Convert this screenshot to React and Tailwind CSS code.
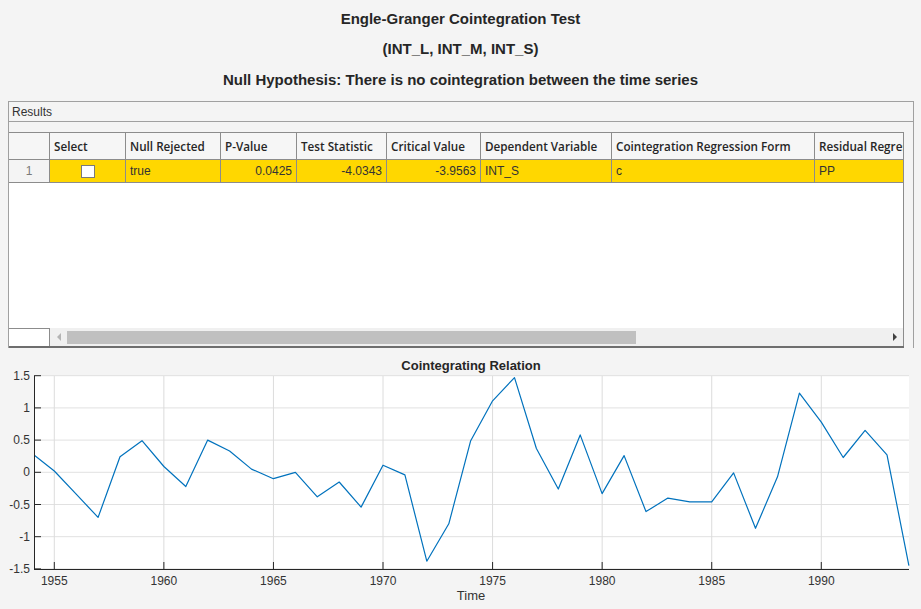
import React from "react";

const columns = [
    { label: "", width: "w-[41px]" },
    { label: "Select", width: "w-[76px]" },
    { label: "Null Rejected", width: "w-[95px]" },
    { label: "P-Value", width: "w-[76px]" },
    { label: "Test Statistic", width: "w-[90px]" },
    { label: "Critical Value", width: "w-[94px]" },
    { label: "Dependent Variable", width: "w-[131px]" },
    { label: "Cointegration Regression Form", width: "w-[203px]" },
    { label: "Residual Regression Form", width: "w-[89px]" },
];

// cointegrating relation, one value per year 1954..1994
const series = [
    0.27, 0.02, -0.34, -0.7, 0.24, 0.49, 0.09, -0.22, 0.5, 0.33, 0.05, -0.1, 0.0, -0.38, -0.15, -0.54, 0.11,
    -0.04, -1.38, -0.8, 0.49, 1.11, 1.47, 0.37, -0.26, 0.58, -0.33, 0.26, -0.61, -0.4, -0.46, -0.46, -0.01,
    -0.87, -0.07, 1.23, 0.78, 0.23, 0.65, 0.27, -1.45,
];

const AX = { left: 34, right: 909, top: 376, bottom: 569 };
const xOf = (year) => Math.max(AX.left, 54.3 + (year - 1955) * 21.914);
const yOf = (v) => 472.3 - v * 64.4;

const xTicks = [1955, 1960, 1965, 1970, 1975, 1980, 1985, 1990];
const yTicks = [1.5, 1, 0.5, 0, -0.5, -1, -1.5];

const cell = "border-r border-b border-[#8c8c8c] h-full flex items-center px-[4px] overflow-hidden whitespace-nowrap";

const ResultsTable = () => {
    return (
        <div className="w-[895px] h-[216px] flex flex-col bg-white border-t border-b-2 border-t-[#8c8c8c] border-b-[#6e6e6e]">
            <div className="flex h-[27px] bg-[#f6f6f6] font-['Open_Sans',sans-serif] font-semibold text-[11.7px] text-[#262626]">
                {columns.map((col, i) => (
                    <div key={i} className={`${cell} ${col.width} pt-[1px]`}>{col.label}</div>
                ))}
            </div>
            <div className="flex h-[23px] bg-[#ffd700] font-['Liberation_Sans',sans-serif] text-[12px] text-[#333333]">
                <div className={`${cell} w-[41px] justify-center bg-[#f4f4f4] text-[#7a7a7a]`}>1</div>
                <div className={`${cell} w-[76px] justify-center`}>
                    <span className="block w-[14px] h-[13px] bg-white border border-[#7a7a7a]" />
                </div>
                <div className={`${cell} w-[95px]`}>true</div>
                <div className={`${cell} w-[76px] justify-end`}>0.0425</div>
                <div className={`${cell} w-[90px] justify-end`}>-4.0343</div>
                <div className={`${cell} w-[94px] justify-end`}>-3.9563</div>
                <div className={`${cell} w-[131px]`}>INT_S</div>
                <div className={`${cell} w-[203px]`}>c</div>
                <div className={`${cell} w-[89px]`}>PP</div>
            </div>
            <div className="flex-1 border-r border-[#8c8c8c]" />
            <div className="flex h-[18px]">
                <div className="w-[41px] border-t border-r border-[#8c8c8c] bg-white" />
                <div className="flex-1 flex items-center bg-[#f0f0f0] border-r border-[#8c8c8c]">
                    <span className="ml-[7px] w-0 h-0 border-y-[4px] border-y-transparent border-r-[4px] border-r-[#b4b4b4]" />
                    <div className="ml-[6px] w-[569px] h-[13px] bg-[#c0c0c0]" />
                    <div className="flex-1" />
                    <span className="mr-[6px] w-0 h-0 border-y-[4px] border-y-transparent border-l-[4px] border-l-[#404040]" />
                </div>
            </div>
        </div>
    );
};

const Chart = () => {
    const points = series.map((v, i) => `${xOf(1954 + i).toFixed(1)},${yOf(v).toFixed(1)}`).join(" ");
    return (
        <svg className="block" width="921" height="261" viewBox="0 348 921 261" fontFamily="Liberation Sans, Arial, sans-serif">
            <text x="471" y="370" textAnchor="middle" fontSize="13" fontWeight="bold" fill="#262626">Cointegrating Relation</text>
            <rect x={AX.left} y={AX.top} width={AX.right - AX.left} height={AX.bottom - AX.top} fill="#ffffff" />
            {yTicks.map((t) => (
                <line key={`gy${t}`} x1={AX.left} x2={AX.right} y1={yOf(t)} y2={yOf(t)} stroke="#e1e1e1" strokeWidth="1" />
            ))}
            {xTicks.map((t) => (
                <line key={`gx${t}`} x1={xOf(t)} x2={xOf(t)} y1={AX.top} y2={AX.bottom} stroke="#dcdcdc" strokeWidth="1" />
            ))}
            <clipPath id="axclip">
                <rect x={AX.left} y={AX.top - 2} width={AX.right - AX.left + 1} height={AX.bottom - AX.top + 4} />
            </clipPath>
            <polyline points={points} fill="none" stroke="#0072bd" strokeWidth="1.2" strokeLinejoin="round" clipPath="url(#axclip)" />
            <line x1={AX.left + 0.5} x2={AX.left + 0.5} y1={AX.top} y2={AX.bottom} stroke="#262626" strokeWidth="1" />
            <line x1={AX.left} x2={AX.right} y1={AX.bottom + 0.5} y2={AX.bottom + 0.5} stroke="#262626" strokeWidth="1" />
            {yTicks.map((t) => (
                <g key={`ty${t}`}>
                    <line x1={AX.left} x2={AX.left + 7} y1={yOf(t)} y2={yOf(t)} stroke="#262626" strokeWidth="1" />
                    <text x="30" y={yOf(t) + 4} textAnchor="end" fontSize="12" fill="#333333">{t}</text>
                </g>
            ))}
            {xTicks.map((t) => (
                <g key={`tx${t}`}>
                    <line x1={xOf(t)} x2={xOf(t)} y1={AX.bottom} y2={AX.bottom - 7} stroke="#262626" strokeWidth="1" />
                    <text x={xOf(t)} y="585" textAnchor="middle" fontSize="12" fill="#333333">{t}</text>
                </g>
            ))}
            <text x="471" y="600" textAnchor="middle" fontSize="13" fill="#333333">Time</text>
        </svg>
    );
};

const App = () => {
    return (
        <div className="w-[921px] h-[609px] bg-[#f4f4f4] overflow-hidden font-['Liberation_Sans',Arial,sans-serif] text-[#262626]">
            <div className="h-[101px] pt-[10px] flex flex-col items-center font-bold text-[15px] leading-[17px]">
                <h1>Engle-Granger Cointegration Test</h1>
                <h2 className="mt-[13px]">(INT_L, INT_M, INT_S)</h2>
                <h2 className="mt-[14px]">Null Hypothesis: There is no cointegration between the time series</h2>
            </div>

            <div className="ml-[8px] w-[906px] h-[247px] border-t border-x border-[#a0a0a0] bg-[#f4f4f4] flex flex-col">
                <div className="h-[20px] border-b border-[#a0a0a0] px-[3px] flex items-center text-[12px] text-[#333333]">Results</div>
                <div className="h-[10px]" />
                <ResultsTable />
            </div>

            <Chart />
        </div>
    );
};

export default App;
